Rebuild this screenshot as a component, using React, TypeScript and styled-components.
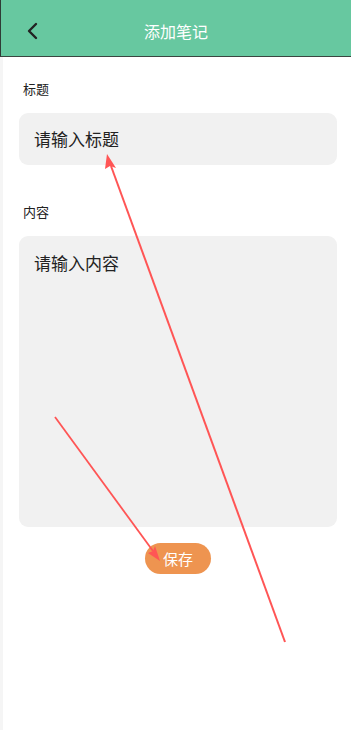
import React from "react";
import styled, { createGlobalStyle } from "styled-components";

const Global = createGlobalStyle`
  html, body { margin: 0; padding: 0; background: #fff; }
  body { font-family: "Noto Sans CJK SC", "Noto Sans", sans-serif; }
  * { box-sizing: border-box; }
`;

const Page = styled.div`
  position: relative;
  width: 351px;
  height: 730px;
  overflow: hidden;
  display: flex;
  flex-direction: column;
`;

const Header = styled.header`
  height: 57px;
  background: #67c8a0;
  border-left: 1px solid #2f3b36;
  border-bottom: 1px solid #3a4540;
  display: flex;
  align-items: center;
  position: relative;
  flex-shrink: 0;
`;

const Back = styled.button`
  border: none;
  background: none;
  padding: 0;
  margin-left: 22px;
  margin-top: 5px;
  width: 18px;
  height: 18px;
  display: flex;
  align-items: center;
  justify-content: center;
  cursor: pointer;
`;

const Title = styled.h1`
  position: absolute;
  left: 0;
  right: 0;
  text-align: center;
  margin: 0;
  font-size: 16px;
  font-weight: 400;
  color: #fff;
  pointer-events: none;
  line-height: 1;
  top: 23px;
`;

const Body = styled.main`
  flex: 1;
  border-left: 3px solid #f5f5f5;
  padding: 0 14px 0 16px;
  display: flex;
  flex-direction: column;
`;

const Label = styled.div<{ $top: number }>`
  font-size: 13px;
  color: #222;
  margin-top: ${(p) => p.$top}px;
  margin-left: 4px;
  line-height: 16px;
`;

const Field = styled.div<{ $height: number; $top: number }>`
  margin-top: ${(p) => p.$top}px;
  height: ${(p) => p.$height}px;
  background: #f1f1f1;
  border-radius: 9px;
  padding: 0 15px;
  display: flex;
  align-items: ${(p) => (p.$height > 60 ? "flex-start" : "center")};
  padding-top: ${(p) => (p.$height > 60 ? "17px" : "0")};
  font-size: 17px;
  color: #222;
  line-height: 20px;
`;

const Actions = styled.div`
  display: flex;
  justify-content: center;
  margin-top: 16px;
`;

const SaveButton = styled.button`
  width: 66px;
  height: 31px;
  border: none;
  border-radius: 16px;
  background: #ee9450;
  color: #fff;
  font-family: inherit;
  font-size: 15px;
  padding: 0;
`;

const Overlay = styled.svg`
  position: absolute;
  left: 0;
  top: 0;
  pointer-events: none;
`;

export default function App() {
  return (
    <Page>
      <Global />
      <Header>
        <Back aria-label="返回">
          <svg width="14" height="18" viewBox="0 0 14 18">
            <path d="M11 2 L4 9 L11 16" fill="none" stroke="#222" strokeWidth="2.4" strokeLinecap="round" strokeLinejoin="round" />
          </svg>
        </Back>
        <Title>添加笔记</Title>
      </Header>
      <Body>
        <Label $top={24}>标题</Label>
        <Field $top={16} $height={52}>请输入标题</Field>
        <Label $top={39}>内容</Label>
        <Field $top={16} $height={291}>请输入内容</Field>
        <Actions>
          <SaveButton>保存</SaveButton>
        </Actions>
      </Body>
      <Overlay width="351" height="730" viewBox="0 0 351 730">
        <path d="M285 642 L111 166" stroke="#ff5555" strokeWidth="2" fill="none" />
        <path d="M107 154 L105 169 L110 166 L116 168 Z" fill="#ff5555" />
        <path d="M55 417 L153 551" stroke="#ff5555" strokeWidth="1.8" fill="none" />
        <path d="M160 561 L148 553 L153 551 L155 546 Z" fill="#ff5555" />
      </Overlay>
    </Page>
  );
}
